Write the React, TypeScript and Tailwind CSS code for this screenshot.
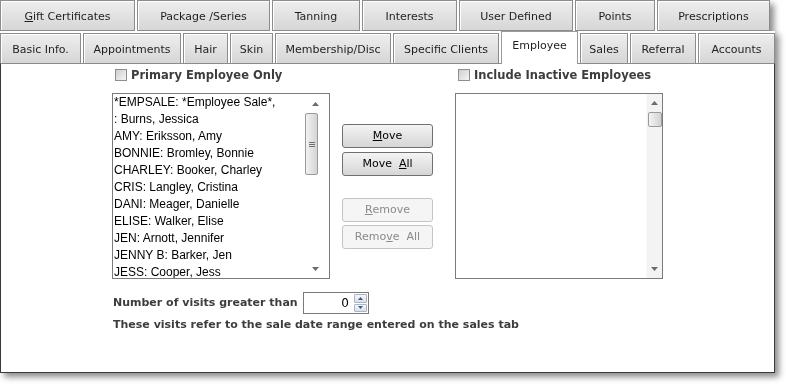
import React from "react";

const tahoma = "font-['DejaVu_Sans',sans-serif]";
const arial = "font-['Liberation_Sans',Arial,sans-serif]";

const row1: { key: string; w: string; label: React.ReactNode }[] = [
  { key: "gift", w: "w-[135px]", label: (<><span className="underline">G</span>ift Certificates</>) },
  { key: "pkg", w: "w-[133px]", label: "Package /Series" },
  { key: "tan", w: "w-[88px]", label: "Tanning" },
  { key: "int", w: "w-[95px]", label: "Interests" },
  { key: "usr", w: "w-[114px]", label: "User Defined" },
  { key: "pts", w: "w-[80px]", label: "Points" },
  { key: "rx", w: "w-[113px]", label: "Prescriptions" },
];

const row2: { key: string; w: string; label: string; selected?: boolean }[] = [
  { key: "basic", w: "w-[81px]", label: "Basic Info." },
  { key: "appt", w: "w-[98px]", label: "Appointments" },
  { key: "hair", w: "w-[45px]", label: "Hair" },
  { key: "skin", w: "w-[43px]", label: "Skin" },
  { key: "memb", w: "w-[116px]", label: "Membership/Disc" },
  { key: "spec", w: "w-[106px]", label: "Specific Clients" },
  { key: "emp", w: "w-[77px]", label: "Employee", selected: true },
  { key: "sales", w: "w-[48px]", label: "Sales" },
  { key: "ref", w: "w-[66px]", label: "Referral" },
  { key: "acc", w: "w-[77px]", label: "Accounts" },
];

const employees = [
  "*EMPSALE: *Employee Sale*,",
  ": Burns, Jessica",
  "AMY: Eriksson, Amy",
  "BONNIE: Bromley, Bonnie",
  "CHARLEY: Booker, Charley",
  "CRIS: Langley, Cristina",
  "DANI: Meager, Danielle",
  "ELISE: Walker, Elise",
  "JEN: Arnott, Jennifer",
  "JENNY B: Barker, Jen",
  "JESS: Cooper, Jess",
];

const tabBase =
  "flex justify-center border border-[#8c8c8c] shadow-[inset_1px_1px_0_#ffffff] text-[11px] leading-[13px] text-[#1e1e1e] whitespace-nowrap " +
  tahoma;

function UpArrow() {
  return (
    <svg width="7" height="4" viewBox="0 0 7 4">
      <path d="M0 4 L3.5 0 L7 4 Z" fill="#6b6b6b" />
    </svg>
  );
}
function DownArrow() {
  return (
    <svg width="7" height="4" viewBox="0 0 7 4">
      <path d="M0 0 L3.5 4 L7 0 Z" fill="#6b6b6b" />
    </svg>
  );
}

function Check({ label }: { label: string }) {
  return (
    <div className="flex items-center h-[14px] ml-[3px]">
      <span className="w-[12px] h-[12px] border border-[#8e8e8e] bg-linear-to-br from-[#cfcfcf] to-[#f5f5f5]" />
      <span className={"ml-[4px] font-bold text-[11.5px] leading-[14px] text-[#3d3d3d] whitespace-nowrap " + tahoma}>
        {label}
      </span>
    </div>
  );
}

function Button({ children, disabled }: { children: React.ReactNode; disabled?: boolean }) {
  return (
    <div
      className={
        "h-[24px] w-[91px] flex items-center justify-center rounded-[3px] border text-[11px] whitespace-pre " +
        tahoma +
        (disabled
          ? " border-[#c4c4c4] bg-[#f5f5f5] text-[#8a8a8a]"
          : " border-[#707070] bg-linear-to-b from-[#f4f4f4] to-[#d6d6d6] text-black")
      }
    >
      {children}
    </div>
  );
}

export default function App() {
  return (
    <div className="w-[786px] h-[386px] bg-white overflow-hidden">
      <div className="w-[775px] drop-shadow-[4px_4px_3px_rgba(0,0,0,0.45)]">
        {/* Row 1 */}
        <div className="flex gap-[2px] w-[770px] h-[31px] bg-white">
          {row1.map((t) => (
            <div
              key={t.key}
              className={t.w + " h-full items-center pt-[2px] bg-linear-to-b from-[#eeeeee] to-[#d6d6d6] " + tabBase}
            >
              {t.label}
            </div>
          ))}
        </div>
        {/* Row 2 */}
        <div className="flex items-end gap-[2px] h-[32px] bg-white">
          {row2.map((t) =>
            t.selected ? (
              <div
                key={t.key}
                className={
                  t.w +
                  " h-[33px] mb-[-1px] relative z-10 items-start pt-[7px] bg-white border-b-0 border-[#9a9a9a] " +
                  tabBase
                }
              >
                {t.label}
              </div>
            ) : (
              <div
                key={t.key}
                className={t.w + " h-[30px] items-center pt-[2px] border-b-0 bg-linear-to-b from-[#eeeeee] to-[#d6d6d6] " + tabBase}
              >
                {t.label}
              </div>
            )
          )}
        </div>
        {/* Panel */}
        <div className="h-[310px] border border-t-[#8c8c8c] border-x-[#3a3a3a] border-b-[#3a3a3a] bg-white">
          <div className="flex pl-[111px] pt-[4px]">
            {/* Left column */}
            <div className="w-[218px]">
              <Check label="Primary Employee Only" />
              <div className="mt-[11px] h-[186px] border border-[#7b7b7b] bg-white flex overflow-hidden">
                <div className={"flex-1 overflow-hidden pl-[1px] text-[12px] leading-[17px] text-black whitespace-nowrap " + arial}>
                  {employees.map((e) => (
                    <div key={e}>{e}</div>
                  ))}
                </div>
                <div className="w-[25px] flex flex-col items-start pl-[1px] bg-white">
                  <div className="w-[20px] h-[19px] flex items-center justify-center">
                    <UpArrow />
                  </div>
                  <div className="w-[13px] h-[62px] rounded-[2px] border border-[#9a9a9a] bg-linear-to-r from-[#f2f2f2] to-[#d4d4d4] flex flex-col items-center justify-center gap-[1px]">
                    <span className="w-[6px] h-px bg-[#707070]" />
                    <span className="w-[6px] h-px bg-[#707070]" />
                    <span className="w-[6px] h-px bg-[#707070]" />
                  </div>
                  <div className="flex-1" />
                  <div className="w-[20px] h-[18px] flex items-center justify-center">
                    <DownArrow />
                  </div>
                </div>
              </div>
            </div>
            {/* Middle buttons */}
            <div className="ml-[12px] w-[91px] pt-[56px] flex flex-col">
              <Button>
                <span className="underline">M</span>ove
              </Button>
              <div className="mt-[4px]">
                <Button>
                  {"Move  "}
                  <span className="underline">A</span>ll
                </Button>
              </div>
              <div className="mt-[22px]">
                <Button disabled>
                  <span className="underline">R</span>emove
                </Button>
              </div>
              <div className="mt-[3px]">
                <Button disabled>
                  {"Remo"}
                  <span className="underline">v</span>
                  {"e  All"}
                </Button>
              </div>
            </div>
            {/* Right column */}
            <div className="ml-[22px] w-[208px]">
              <Check label="Include Inactive Employees" />
              <div className="mt-[11px] h-[186px] border border-[#7b7b7b] bg-white flex overflow-hidden">
                <div className="flex-1" />
                <div className="w-[16px] flex flex-col items-center bg-[#f3f3f3] border-l border-[#fafafa]">
                  <div className="h-[18px] flex items-center justify-center">
                    <UpArrow />
                  </div>
                  <div className="w-[14px] h-[15px] rounded-[2px] border border-[#9a9a9a] bg-linear-to-r from-[#f4f4f4] to-[#d2d2d2]" />
                  <div className="flex-1" />
                  <div className="h-[18px] flex items-center justify-center">
                    <DownArrow />
                  </div>
                </div>
              </div>
            </div>
          </div>
          {/* Bottom */}
          <div className="pl-[112px] mt-[13px]">
            <div className="flex items-center h-[22px]">
              <span className={"w-[190px] font-bold text-[11px] text-[#3d3d3d] whitespace-nowrap " + tahoma}>
                Number of visits greater than
              </span>
              <div className="w-[66px] h-[22px] border border-[#7a7a7a] bg-white flex">
                <div className={"flex-1 flex items-center justify-end pr-[4px] text-[12px] text-black " + tahoma}>0</div>
                <div className="w-[15px] flex flex-col p-[1px] gap-px">
                  <div className="flex-1 rounded-[1px] border border-[#a9b4c4] bg-linear-to-b from-[#f4f6fa] to-[#dbe1ea] flex items-center justify-center">
                    <svg width="5" height="3" viewBox="0 0 5 3">
                      <path d="M0 3 L2.5 0 L5 3 Z" fill="#3c5a8a" />
                    </svg>
                  </div>
                  <div className="flex-1 rounded-[1px] border border-[#a9b4c4] bg-linear-to-b from-[#f4f6fa] to-[#dbe1ea] flex items-center justify-center">
                    <svg width="5" height="3" viewBox="0 0 5 3">
                      <path d="M0 0 L2.5 3 L5 0 Z" fill="#3c5a8a" />
                    </svg>
                  </div>
                </div>
              </div>
            </div>
            <div className={"mt-[4px] font-bold text-[11px] leading-[14px] text-[#3d3d3d] whitespace-nowrap " + tahoma}>
              These visits refer to the sale date range entered on the sales tab
            </div>
          </div>
        </div>
      </div>
    </div>
  );
}
